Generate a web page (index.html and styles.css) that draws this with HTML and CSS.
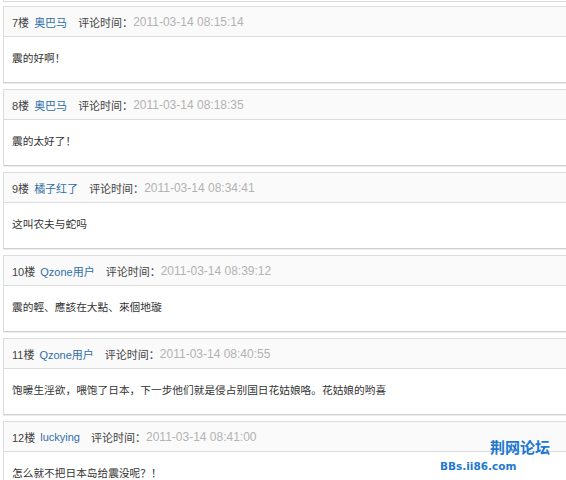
FILE: index.html
```html
<!DOCTYPE html>
<html lang="zh-CN">
<head>
<meta charset="utf-8">
<link rel="stylesheet" href="styles.css">
</head>
<body>
<div class="list">
  <div class="tail"></div>
  <div class="post">
    <div class="head"><span class="floor">7楼</span><span class="name">奥巴马</span><span class="label">评论时间：</span><span class="time">2011-03-14 08:15:14</span></div>
    <div class="body">震的好啊！</div>
  </div>
  <div class="post">
    <div class="head"><span class="floor">8楼</span><span class="name">奥巴马</span><span class="label">评论时间：</span><span class="time">2011-03-14 08:18:35</span></div>
    <div class="body">震的太好了！</div>
  </div>
  <div class="post">
    <div class="head"><span class="floor">9楼</span><span class="name">橘子红了</span><span class="label">评论时间：</span><span class="time">2011-03-14 08:34:41</span></div>
    <div class="body">这叫农夫与蛇吗</div>
  </div>
  <div class="post">
    <div class="head"><span class="floor">10楼</span><span class="name">Qzone用户</span><span class="label">评论时间：</span><span class="time">2011-03-14 08:39:12</span></div>
    <div class="body">震的輕、應該在大點、來個地璇</div>
  </div>
  <div class="post">
    <div class="head"><span class="floor">11楼</span><span class="name">Qzone用户</span><span class="label">评论时间：</span><span class="time">2011-03-14 08:40:55</span></div>
    <div class="body">饱暖生淫欲，喂饱了日本，下一步他们就是侵占别国日花姑娘咯。花姑娘的哟喜</div>
  </div>
  <div class="post">
    <div class="head"><span class="floor">12楼</span><span class="name">luckying</span><span class="label">评论时间：</span><span class="time">2011-03-14 08:41:00</span></div>
    <div class="body">怎么就不把日本岛给震没呢？！</div>
  </div>
</div>
<div class="watermark">
  <div class="wm-cn">荆网论坛</div>
  <div class="wm-en">BBs.ii86.com</div>
</div>
</body>
</html>
```
FILE: styles.css
```css
html, body {
  margin: 0;
  padding: 0;
  background: #ffffff;
  overflow: hidden;
}
body {
  font-family: "Liberation Sans", "Noto Sans CJK SC", sans-serif;
  font-size: 11px;
  color: #333333;
  width: 566px;
  height: 480px;
  position: relative;
}
.list {
  width: 640px;
  margin-left: 3px;
}
.tail {
  height: 1px;
  border: 1px solid #d6dade;
  border-top: none;
  margin-bottom: 4px;
}
.post {
  margin-bottom: 6px;
}
.head {
  height: 29px;
  border: 1px solid #dcdcdc;
  background: #fafafa;
  display: flex;
  align-items: center;
  padding-left: 8px;
  white-space: nowrap;
}
.floor {
  color: #444444;
  margin-right: 5px;
}
.name {
  color: #2f6ea6;
  margin-right: 11px;
}
.label {
  color: #444444;
}
.time {
  color: #b2b2b2;
  font-size: 12px;
}
.body {
  height: 41px;
  padding-bottom: 4px;
  border: 1px solid #dcdcdc;
  border-top: none;
  border-bottom-color: #d0d0d0;
  box-shadow: 0 1px 0 #ececec;
  display: flex;
  align-items: center;
  padding-left: 8px;
  white-space: nowrap;
  background: #ffffff;
  font-size: 10.7px;
}
.watermark {
  position: absolute;
  left: 440px;
  top: 437px;
  color: #1e78cf;
  font-weight: bold;
}
.wm-cn {
  padding-left: 50px;
  font-family: "Noto Sans CJK SC", sans-serif;
  font-size: 15px;
  line-height: 20px;
}
.wm-en {
  font-family: "DejaVu Sans", sans-serif;
  font-size: 10.5px;
  line-height: 14px;
  margin-top: 2px;
}
```
